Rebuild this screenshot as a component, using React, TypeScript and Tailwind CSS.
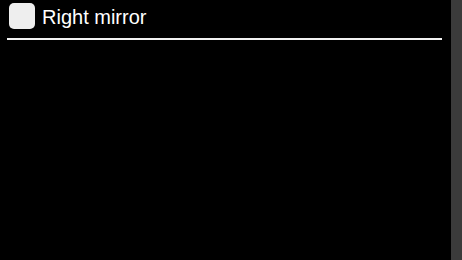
export default function App() {
  return (
    <div className="flex h-[260px] w-[462px] bg-black font-['Liberation_Sans',Arial,sans-serif] text-white">
      <div className="flex-1 pl-[7px] pr-[9px]">
        <label className="flex h-[38px] items-start gap-[7px] pl-[2px] pt-[3px]">
          <span className="h-[26px] w-[26px] rounded-[5px] bg-[#eeeeee]" />
          <span className="pt-[4px] text-[20px] leading-none">Right mirror</span>
        </label>
        <div className="h-[2px] bg-[#f2f2f2]" />
      </div>
      <div className="w-[11px] bg-[#3b3b3b]" />
    </div>
  );
}
